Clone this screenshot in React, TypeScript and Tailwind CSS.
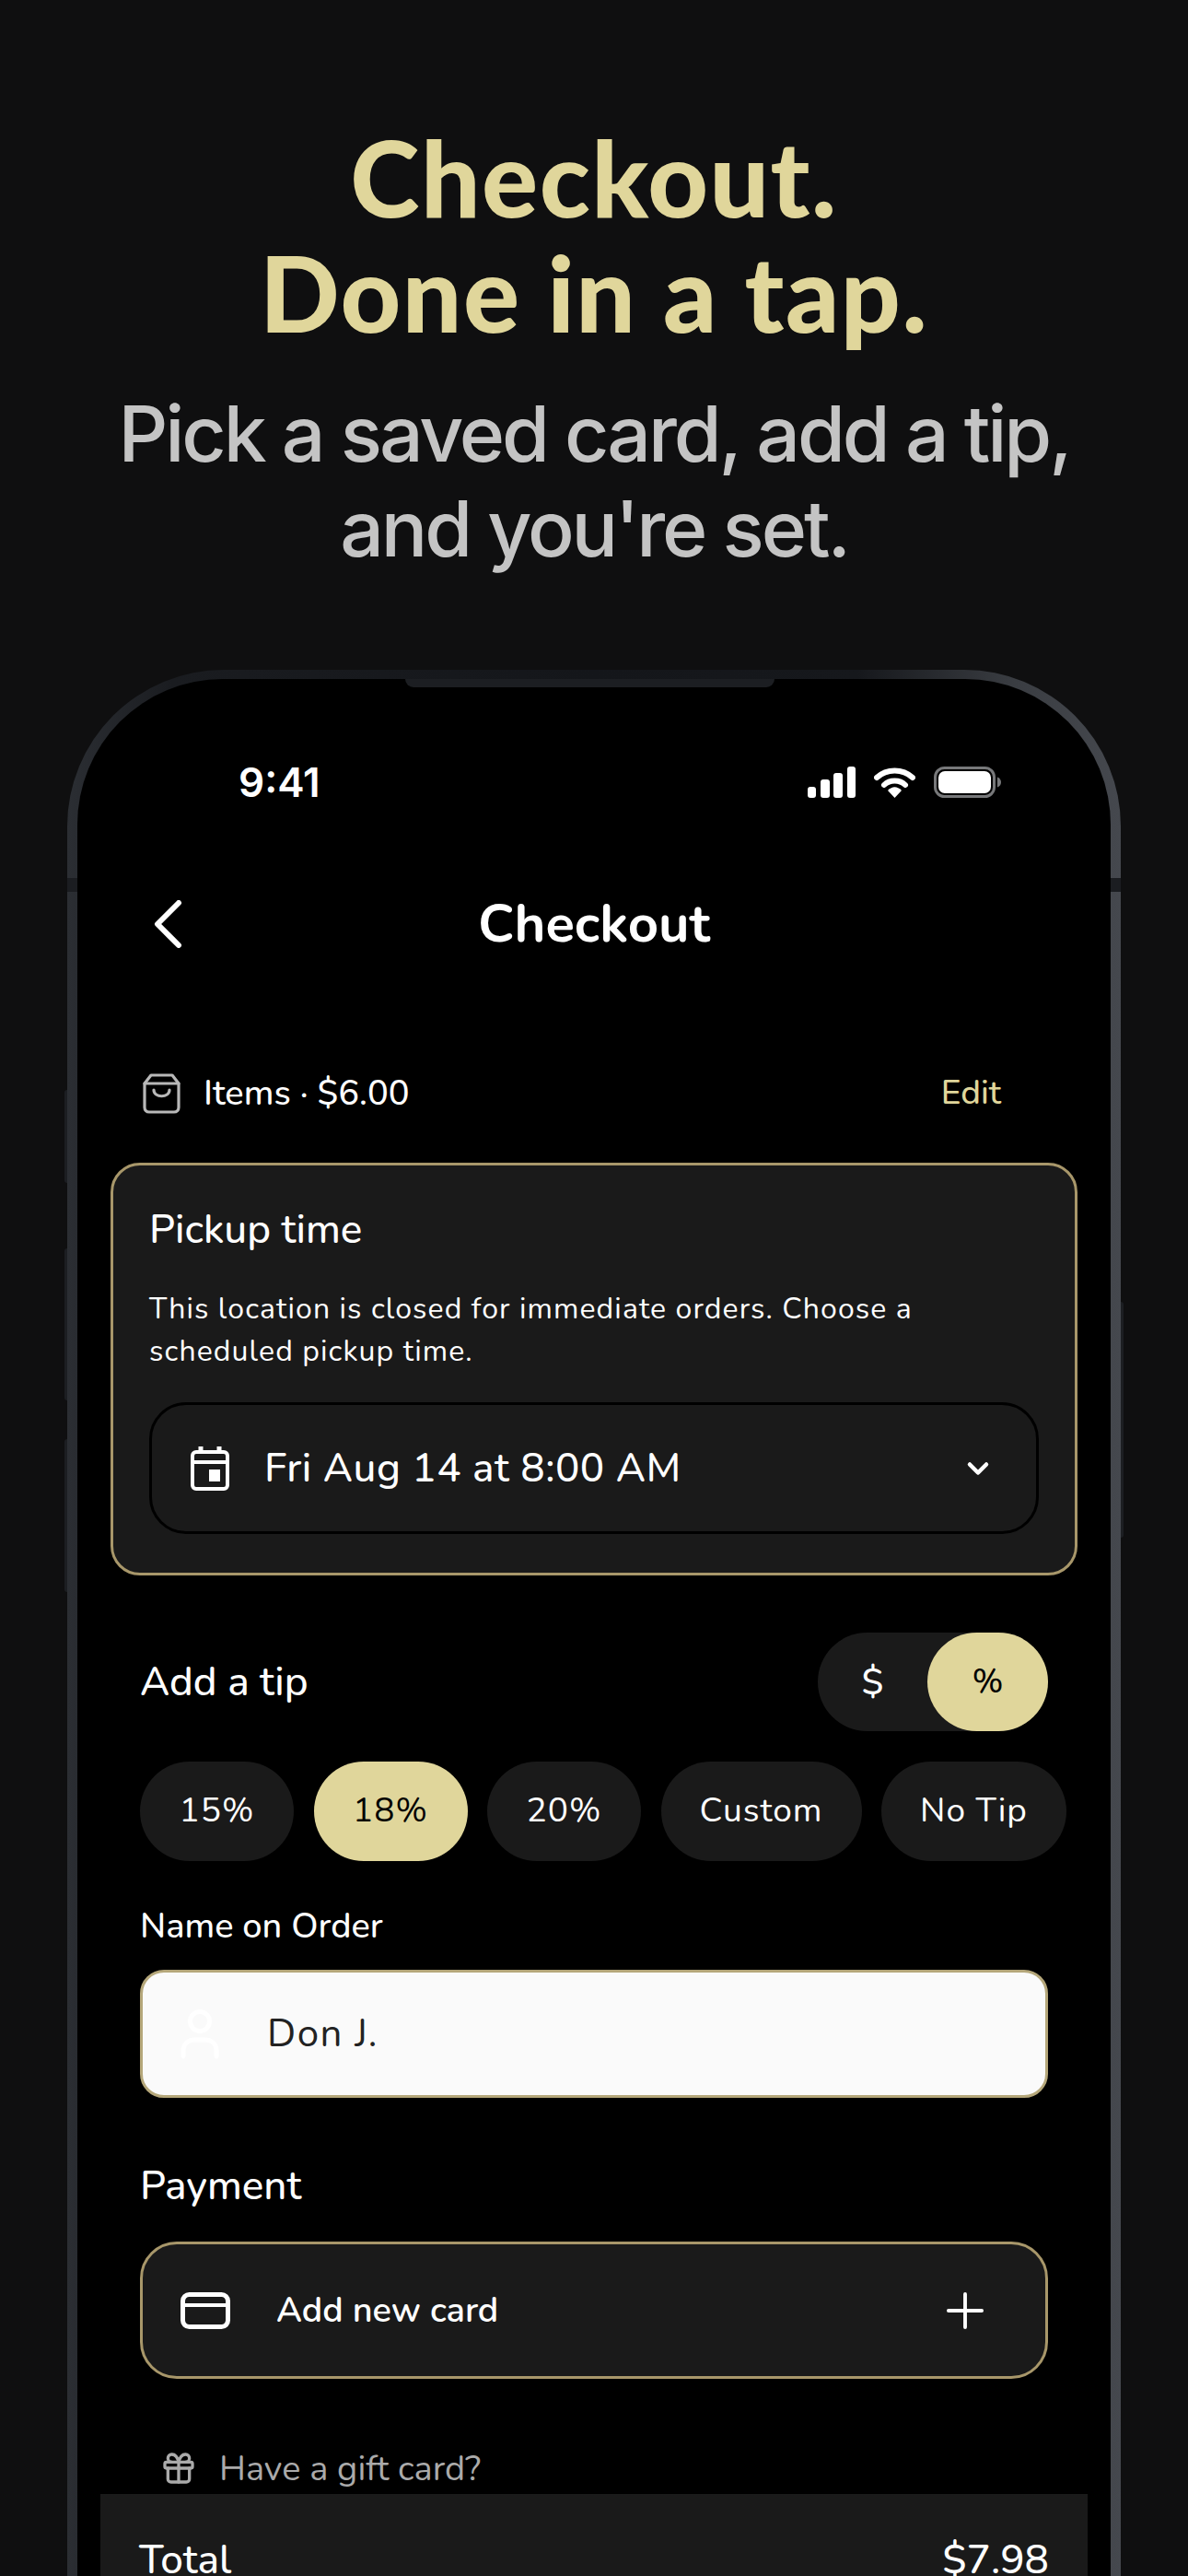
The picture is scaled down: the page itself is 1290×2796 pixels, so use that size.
import { ChevronDown, Gift, Plus } from 'lucide-react';

const ui = "font-['Nunito','Lato','Noto_Sans',sans-serif]";

const tips = [
  { label: '15%', w: 'w-[167px]' },
  { label: '18%', w: 'w-[167px]', active: true },
  { label: '20%', w: 'w-[167px]' },
  { label: 'Custom', w: 'w-[218px]' },
  { label: 'No Tip', w: 'w-[201px]' }
];

function StatusIcons() {
  return (
    <div className="flex items-center gap-[20px]">
      <svg width="52" height="34" viewBox="0 0 52 34" fill="#fff">
        <rect x="0" y="22" width="9" height="12" rx="3" />
        <rect x="14" y="14" width="10" height="20" rx="3" />
        <rect x="28" y="7" width="10" height="27" rx="3" />
        <rect x="43" y="0" width="9" height="34" rx="3" />
      </svg>
      <svg width="45" height="34" viewBox="0 0 45 34" fill="none">
        <path d="M3 12C14 2 31 2 42 12" stroke="#fff" strokeWidth="6" strokeLinecap="round" />
        <path d="M11 20C17 14 28 14 34 20" stroke="#fff" strokeWidth="6" strokeLinecap="round" />
        <path d="M15 26C20 21 25 21 30 26L22.500 34Z" fill="#fff" />
      </svg>
      <svg width="73" height="34" viewBox="0 0 73 34" fill="none">
        <rect x="1.500" y="1.500" width="64" height="31" rx="10" stroke="#77787a" strokeWidth="3" />
        <rect x="5" y="5" width="57" height="24" rx="7" fill="#fff" />
        <path d="M69 11.500C72 12.500 73 15 73 17C73 19 72 21.500 69 22.500Z" fill="#77787a" />
      </svg>
    </div>
  );
}

function BagIcon() {
  return (
    <svg width="41" height="44" viewBox="0 0 41 44" fill="none" stroke="#b8b8b8" strokeWidth="3.200" strokeLinecap="round" strokeLinejoin="round">
      <path d="M9 2H32L39 11V37C39 40 37 42 34 42H7C4 42 2 40 2 37V11Z" />
      <path d="M2 11H39" />
      <path d="M12 18C12 27 29 27 29 18" />
    </svg>
  );
}

function CalendarIcon() {
  return (
    <svg width="42" height="49" viewBox="0 0 42 49" fill="none">
      <path d="M11 1V8M31 1V8" stroke="#fff" strokeWidth="5" />
      <rect x="2" y="7" width="38" height="40" rx="4" stroke="#fff" strokeWidth="4" />
      <path d="M2 18H40" stroke="#fff" strokeWidth="4" />
      <rect x="20" y="26" width="12" height="13" fill="#fff" />
    </svg>
  );
}

function CardIcon() {
  return (
    <svg width="54" height="40" viewBox="0 0 54 40" fill="none" stroke="#fff" strokeWidth="5">
      <rect x="2.500" y="2.500" width="49" height="35" rx="7" />
      <path d="M2 14H52" strokeWidth="4" />
    </svg>
  );
}

function UserIcon() {
  return (
    <svg width="42" height="54" viewBox="0 0 42 54" fill="none" stroke="#fff" strokeWidth="5" strokeLinecap="round">
      <circle cx="21" cy="13" r="10.500" />
      <path d="M3 51V44C3 37 9 33 15 33H27C33 33 39 37 39 44V51" />
    </svg>
  );
}

export default function App() {
  return (
    <div className="h-[2796px] bg-[#0f0f10] flex flex-col items-center overflow-hidden">
      <h1 className="pt-[129px] text-center text-[#e0d69b] text-[114px] leading-[125px] tracking-[1.500px] font-black font-['Lato',sans-serif]">
        Checkout.
        <br />
        Done in a tap.
      </h1>
      <p className="mt-[40px] text-center text-[#c4c4c4] text-[84px] leading-[103px] font-medium tracking-[-3.100px] font-['Inter',sans-serif]">
        Pick a saved card, add a tip,
        <br />
        and you're set.
      </p>

      <div className="relative mt-[102px] w-[1144px] flex-1 min-h-0 flex flex-col px-[11px] pt-[10px] rounded-t-[170px] bg-[linear-gradient(90deg,#2b2e33,#1a1c20_10%,#14161a_50%,#16181c_75%,#3a3d42_90%,#45484e)]">
        <div className="absolute left-[-3px] top-[456px] w-[3px] h-[101px] bg-[#1c1e22] rounded-l-sm" />
        <div className="absolute left-[-3px] top-[628px] w-[3px] h-[165px] bg-[#1c1e22] rounded-l-sm" />
        <div className="absolute left-[-3px] top-[835px] w-[3px] h-[166px] bg-[#1c1e22] rounded-l-sm" />
        <div className="absolute right-[-3px] top-[686px] w-[3px] h-[256px] bg-[#1c1e22] rounded-r-sm" />
        <div className="absolute left-0 top-[226px] w-[11px] h-[15px] bg-[#1b1d21]" />
        <div className="absolute right-0 top-[226px] w-[11px] h-[15px] bg-[#1b1d21]" />

        <div className={`relative flex-1 min-h-0 flex flex-col bg-black rounded-t-[158px] overflow-hidden text-white ${ui}`}>
          <div className="absolute left-[356px] top-0 w-[401px] h-[9px] bg-[#1c1e22] rounded-b-[14px]" />

          <div className="flex items-center justify-between pt-[95px] pl-[175px] pr-[119px] h-[129px] shrink-0">
            <span className="text-[44px] leading-[34px] font-semibold font-['Inter',sans-serif]">9:41</span>
            <StatusIcons />
          </div>

          <div className="relative flex justify-center items-center mt-[102px] h-[70px] shrink-0">
            <svg className="absolute left-[82px] top-[9px]" width="32" height="52" viewBox="0 0 32 52" fill="none" stroke="#fff" strokeWidth="6" strokeLinecap="round" strokeLinejoin="round">
              <path d="M28 3L5 26L28 49" />
            </svg>
            <span className="text-[58px] font-bold leading-[70px]">Checkout</span>
          </div>

          <div className="flex items-center justify-between mt-[127px] pl-[71px] pr-[119px] h-[43px] shrink-0">
            <div className="flex items-center gap-[25px]">
              <BagIcon />
              <span className="text-[38px] font-medium">Items · $6.00</span>
            </div>
            <span className="text-[37px] font-medium text-[#e0d69b]">Edit</span>
          </div>

          <div className="mt-[54px] mx-[36px] h-[448px] shrink-0 flex flex-col px-[39px] pt-[45px] border-[3px] border-[#a8976a] rounded-[32px] bg-[#1a1a1a]">
            <div className="text-[44px] leading-[50px] font-medium">Pickup time</div>
            <p className="mt-[38px] text-[32px] leading-[46px] tracking-[1.100px]">
              This location is closed for immediate orders. Choose a
              <br />
              scheduled pickup time.
            </p>
            <div className="mt-[32px] h-[143px] shrink-0 flex items-center pl-[42px] pr-[45px] border-[3px] border-black rounded-[40px]">
              <CalendarIcon />
              <span className="ml-[38px] text-[44px] font-medium tracking-[0.500px]">Fri Aug 14 at 8:00 AM</span>
              <ChevronDown className="ml-auto text-white" size={36} strokeWidth={3} />
            </div>
          </div>

          <div className="mt-[62px] pl-[68px] pr-[68px] flex items-center justify-between shrink-0">
            <span className="text-[44px] font-medium">Add a tip</span>
            <div className="w-[250px] h-[107px] flex items-center rounded-full bg-[#1a1a1a]">
              <span className="flex-1 text-center text-[40px] font-medium">$</span>
              <span className="w-[131px] h-full rounded-full bg-[#e0d69b] text-black flex items-center justify-center text-[36px] font-medium">%</span>
            </div>
          </div>

          <div className="mt-[33px] pl-[68px] flex gap-[21.500px] shrink-0">
            {tips.map((t) => (
              <div
                key={t.label}
                className={`${t.w} h-[108px] shrink-0 rounded-full flex items-center justify-center text-[37px] tracking-[1px] ${t.active ? 'bg-[#e0d69b] text-black' : 'bg-[#1a1a1a] text-white'}`}
              >
                {t.label}
              </div>
            ))}
          </div>

          <div className="mt-[47px] pl-[68px] text-[38px] leading-[48px] font-medium shrink-0">Name on Order</div>

          <div className="mt-[23px] mx-[68px] h-[139px] shrink-0 flex items-center pl-[41px] border-[3px] border-[#b5a77a] rounded-[26px] bg-[#fafafa]">
            <UserIcon />
            <span className="ml-[52px] text-[42px] tracking-[1.500px] text-[#222]">Don J.</span>
          </div>

          <div className="mt-[68px] pl-[68px] text-[44px] leading-[56px] font-medium shrink-0">Payment</div>

          <div className="mt-[32px] mx-[68px] h-[149px] shrink-0 flex items-center pl-[41px] pr-[56px] border-[3px] border-[#a8976a] rounded-[40px] bg-[#1a1a1a]">
            <CardIcon />
            <span className="ml-[50px] text-[38px] font-semibold">Add new card</span>
            <Plus className="ml-auto" size={62} strokeWidth={1.500} />
          </div>

          <div className="mt-[77px] pl-[90px] flex items-center gap-[24px] h-[40px] shrink-0 text-[#aaaaaa]">
            <Gift size={40} strokeWidth={2} />
            <span className="text-[38px]">Have a gift card?</span>
          </div>

          <div className="mt-[8px] mx-[25px] flex-1 bg-[#1a1a1a] flex items-start justify-between pt-[44px] pl-[42px] pr-[42px] text-[44px] font-medium leading-[56px]">
            <span>Total</span>
            <span>$7.98</span>
          </div>
        </div>
      </div>
    </div>
  );
}
